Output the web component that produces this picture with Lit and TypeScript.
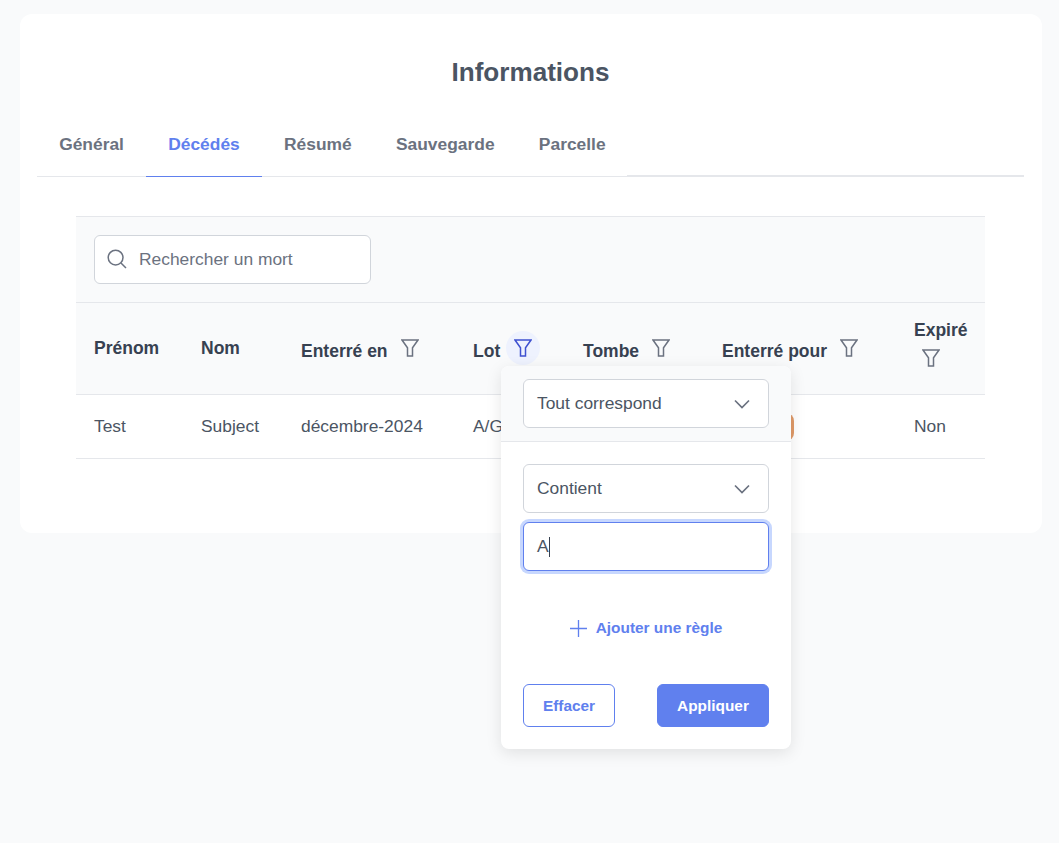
import { LitElement, html, css, svg } from 'lit';
import { customElement } from 'lit/decorators.js';

const funnel = svg`<path d="M1 1h16L11.5 8.8v8.2H6.5V8.8z" fill="none" stroke="currentColor" stroke-width="1.5" />`;

const filterIcon = () => html`<svg class="funnel" width="18" height="18" viewBox="0 0 18 18">${funnel}</svg>`;

const chevron = html`<svg class="chev" width="16" height="16" viewBox="0 0 16 16">
  <path d="M1 4.5l7 7 7-7" fill="none" stroke="currentColor" stroke-width="1.7" />
</svg>`;

@customElement('app-root')
export class AppRoot extends LitElement {
  static styles = css`
    :host {
      display: block;
      min-height: 843px;
      background: #f9fafb;
      font-family: 'Liberation Sans', Arial, sans-serif;
      color: #4b5563;
      box-sizing: border-box;
      padding: 14px 17px 0 20px;
    }
    * {
      box-sizing: border-box;
    }
    .card {
      background: #fff;
      border-radius: 12px;
      height: 519px;
      padding: 0 18px 0 17px;
    }
    h1 {
      margin: 0;
      padding-top: 43px;
      height: 102px;
      font-size: 26.1px;
      line-height: 30px;
      font-weight: 700;
      text-align: center;
      color: #4b5563;
    }
    .tabs {
      display: flex;
      height: 61px;
      border-bottom: 1px solid #e5e7eb;
      position: relative;
    }
    .tabs::after {
      content: '';
      position: absolute;
      left: 590px;
      right: 0;
      bottom: 0;
      height: 1px;
      background: #e5e7eb;
    }
    .tab {
      padding: 0 22.15px;
      height: 61px;
      line-height: 57px;
      font-size: 17.4px;
      font-weight: 700;
      color: #6b7280;
      border-bottom: 1px solid transparent;
    }
    .tab.on {
      color: #6080ee;
      border-bottom-color: #6080ee;
    }
    .panel {
      position: relative;
      margin: 39px 39px 0;
      border-top: 1px solid #e5e7eb;
    }
    .toolbar {
      height: 86px;
      background: #f9fafb;
      border-bottom: 1px solid #e5e7eb;
      padding: 18px;
    }
    .search {
      width: 277px;
      height: 49px;
      display: flex;
      align-items: center;
      gap: 12px;
      padding-left: 12px;
      padding-bottom: 1px;
      background: #fff;
      border: 1px solid #d1d5db;
      border-radius: 6px;
      font-size: 17.4px;
      color: #6b7280;
    }
    .search svg {
      color: #6b7280;
      flex: none;
    }
    .row {
      display: grid;
      grid-template-columns: 107px 100px 172px 110px 139px 192px 89px;
      border-bottom: 1px solid #e5e7eb;
    }
    .head {
      height: 92px;
      background: #f9fafb;
      font-size: 17.5px;
      font-weight: 700;
      color: #374151;
    }
    .head > div {
      padding-left: 18px;
      display: flex;
      align-items: center;
    }
    .body {
      height: 64px;
      font-size: 17.4px;
      color: #4b5563;
    }
    .body > div {
      padding-left: 18px;
      padding-bottom: 1px;
      display: flex;
      align-items: center;
      white-space: nowrap;
    }
    .funnel {
      color: #6b7280;
      flex: none;
    }
    .withf {
      gap: 13px;
    }
    .withf span {
      padding-top: 6px;
    }
    .withf .funnel {
      margin-top: -2px;
    }
    .lot {
      gap: 6px;
    }
    .lot span {
      padding-top: 6px;
    }
    .hit {
      width: 34px;
      height: 34px;
      border-radius: 50%;
      background: #eef2fe;
      display: flex;
      align-items: center;
      justify-content: center;
      margin-top: -2px;
      flex: none;
    }
    .hit .funnel {
      color: #3f51d0;
    }
    .expire {
      flex-direction: column;
      align-items: flex-start !important;
      justify-content: center;
      gap: 8px;
      padding-bottom: 10px;
    }
    .expire .funnel {
      margin-left: 8px;
    }
    .pill {
      display: inline-block;
      width: 72px;
      height: 28px;
      margin-top: 1px;
      border-radius: 8px;
      background: #e09a68;
    }
    .pop {
      position: absolute;
      left: 425px;
      top: 149px;
      width: 290px;
      height: 383px;
      background: #fff;
      border-radius: 8px;
      box-shadow: 0 4px 16px rgba(0, 0, 0, 0.1);
      overflow: hidden;
    }
    .pop-top {
      height: 76px;
      background: #f9fafb;
      border-bottom: 1px solid #e5e7eb;
      padding: 13px 22px 0;
    }
    .sel,
    .inp {
      width: 246px;
      height: 49px;
      background: #fff;
      border: 1px solid #d1d5db;
      border-radius: 6px;
      font-size: 17.4px;
      color: #4b5563;
      display: flex;
      align-items: center;
      padding: 0 13px;
    }
    .sel {
      justify-content: space-between;
    }
    .chev {
      color: #6b7280;
      margin-right: 5px;
    }
    .pop-rules {
      padding: 22px 22px 0;
    }
    .inp {
      margin-top: 9px;
      border-color: #6080ee;
      box-shadow: 0 0 0 3px #c7d7fe;
    }
    .caret {
      display: inline-block;
      width: 1px;
      height: 20px;
      background: #374151;
    }
    .add {
      display: flex;
      justify-content: center;
      align-items: center;
      gap: 9px;
      margin-top: 46px;
      height: 22px;
      font-size: 15.4px;
      font-weight: 700;
      color: #6080ee;
    }
    .btns {
      display: flex;
      justify-content: space-between;
      margin-top: 45px;
    }
    .btn {
      height: 43px;
      border-radius: 6px;
      border: 1px solid #6080ee;
      font-size: 15.4px;
      font-weight: 700;
      display: flex;
      align-items: center;
      justify-content: center;
    }
    .clear {
      width: 92px;
      color: #6080ee;
      background: #fff;
    }
    .apply {
      width: 112px;
      color: #fff;
      background: #6080ee;
    }
  `;

  render() {
    return html`
      <div class="card">
        <h1>Informations</h1>
        <div class="tabs">
          <div class="tab">Général</div>
          <div class="tab on">Décédés</div>
          <div class="tab">Résumé</div>
          <div class="tab">Sauvegarde</div>
          <div class="tab">Parcelle</div>
        </div>
        <div class="panel">
          <div class="toolbar">
            <div class="search">
              <svg width="20" height="20" viewBox="0 0 20 20">
                <circle cx="8.6" cy="8.6" r="7.4" fill="none" stroke="currentColor" stroke-width="1.5" />
                <path d="M14 14l5 5" stroke="currentColor" stroke-width="1.5" />
              </svg>
              Rechercher un mort
            </div>
          </div>
          <div class="row head">
            <div>Prénom</div>
            <div>Nom</div>
            <div class="withf"><span>Enterré en</span>${filterIcon()}</div>
            <div class="lot"><span>Lot</span><div class="hit">${filterIcon()}</div></div>
            <div class="withf"><span>Tombe</span>${filterIcon()}</div>
            <div class="withf"><span>Enterré pour</span>${filterIcon()}</div>
            <div class="expire"><span>Expiré</span>${filterIcon()}</div>
          </div>
          <div class="row body">
            <div>Test</div>
            <div>Subject</div>
            <div>décembre-2024</div>
            <div>A/G</div>
            <div></div>
            <div><span class="pill"></span></div>
            <div>Non</div>
          </div>
          <div class="pop">
            <div class="pop-top">
              <div class="sel">Tout correspond ${chevron}</div>
            </div>
            <div class="pop-rules">
              <div class="sel">Contient ${chevron}</div>
              <div class="inp">A<span class="caret"></span></div>
              <div class="add">
                <svg width="17" height="17" viewBox="0 0 18 18">
                  <path d="M9 0v18M0 9h18" stroke="currentColor" stroke-width="1.4" />
                </svg>
                Ajouter une règle
              </div>
              <div class="btns">
                <div class="btn clear">Effacer</div>
                <div class="btn apply">Appliquer</div>
              </div>
            </div>
          </div>
        </div>
      </div>
    `;
  }
}
